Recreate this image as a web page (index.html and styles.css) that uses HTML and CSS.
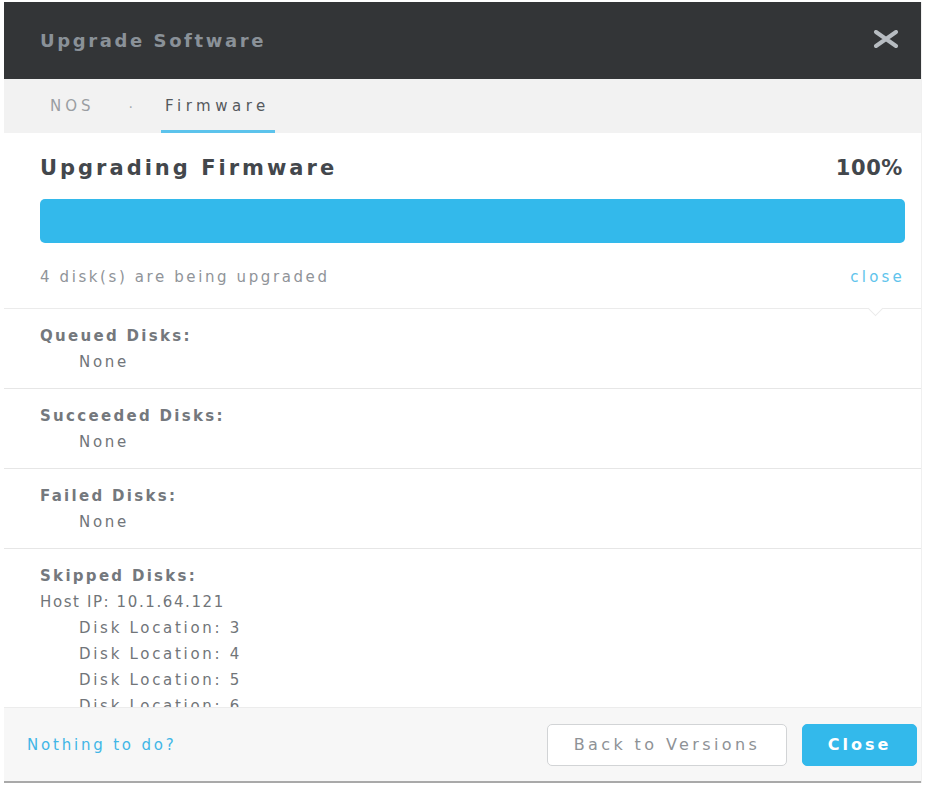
FILE: index.html
```html
<!DOCTYPE html>
<html lang="en">
<head>
<meta charset="utf-8">
<title>Upgrade Software</title>
<link rel="stylesheet" href="styles.css">
</head>
<body>
<div class="modal">
  <header class="modal-header">
    <h1 class="modal-title">Upgrade Software</h1>
    <svg class="modal-close" width="26" height="18" viewBox="0 0 26 18" aria-hidden="true">
      <path d="M3 2 L23 16 M23 2 L3 16" stroke="#b7bcc1" stroke-width="4" stroke-linecap="round"/>
    </svg>
  </header>
  <nav class="tabs">
    <span class="tab">NOS</span>
    <span class="tab-sep">·</span>
    <span class="tab tab-active">Firmware</span>
  </nav>
  <section class="progress">
    <div class="progress-head">
      <h2 class="progress-title">Upgrading Firmware</h2>
      <span class="progress-pct">100%</span>
    </div>
    <div class="bar"><div class="bar-fill" style="width:100%"></div></div>
    <div class="status">
      <span class="status-text">4 disk(s) are being upgraded</span>
      <a class="status-link">close</a>
    </div>
    <span class="caret"></span>
  </section>
  <div class="disk-list">
    <div class="group">
      <div class="group-label">Queued Disks:</div>
      <div class="indent">None</div>
    </div>
    <div class="group">
      <div class="group-label">Succeeded Disks:</div>
      <div class="indent">None</div>
    </div>
    <div class="group">
      <div class="group-label">Failed Disks:</div>
      <div class="indent">None</div>
    </div>
    <div class="group">
      <div class="group-label">Skipped Disks:</div>
      <div class="host">Host IP: 10.1.64.121</div>
      <div class="indent">Disk Location: 3</div>
      <div class="indent">Disk Location: 4</div>
      <div class="indent">Disk Location: 5</div>
      <div class="indent">Disk Location: 6</div>
    </div>
  </div>
  <footer class="modal-footer">
    <a class="footer-link">Nothing to do?</a>
    <div class="footer-actions">
      <button class="btn btn-secondary">Back to Versions</button>
      <button class="btn btn-primary">Close</button>
    </div>
  </footer>
</div>
</body>
</html>
```
FILE: styles.css
```css
html, body {
  margin: 0;
  padding: 0;
  background: #ffffff;
}

body {
  font-family: "DejaVu Sans", "Noto Sans", sans-serif;
  color: #6c7075;
}

.modal {
  width: 917px;
  margin: 2px 0 0 4px;
  display: flex;
  flex-direction: column;
  border-right: 1px solid #f0f0f0;
}

.modal-header {
  height: 77px;
  background: #333537;
  display: flex;
  align-items: center;
  justify-content: space-between;
  padding: 0 22px 0 36px;
}

.modal-title {
  margin: 0;
  font-size: 18px;
  font-weight: bold;
  color: #8a9198;
  letter-spacing: 2.6px;
}

.modal-close {
  display: block;
  margin-top: -3px;
}

.tabs {
  height: 54px;
  background: #f2f2f2;
  display: flex;
  align-items: stretch;
  padding-left: 42px;
}

.tab {
  display: flex;
  align-items: center;
  padding: 2px 4px 0;
  font-size: 15px;
  letter-spacing: 4px;
  color: #9a9ea2;
  border-bottom: 3px solid transparent;
}

.tab-sep {
  display: flex;
  align-items: center;
  padding: 2px 28px 0 30px;
  color: #a8acb0;
  font-size: 14px;
}

.tab-active {
  color: #55595d;
  border-bottom-color: #5cc3ec;
  letter-spacing: 4.5px;
  padding: 2px 5px 0 4px;
}

.progress {
  position: relative;
  padding: 21px 16px 21px 36px;
  border-bottom: 1px solid #ebebeb;
}

.progress-head {
  display: flex;
  justify-content: space-between;
  align-items: center;
  height: 28px;
  padding-right: 2px;
}

.progress-title {
  margin: 0;
  font-size: 21px;
  font-weight: bold;
  color: #43474c;
  letter-spacing: 3px;
}

.progress-pct {
  font-size: 21px;
  font-weight: bold;
  color: #43474c;
  letter-spacing: 0.6px;
}

.bar {
  margin-top: 17px;
  height: 44px;
  border-radius: 5px;
  background: #e8e8e8;
  overflow: hidden;
}

.bar-fill {
  height: 100%;
  background: #33b9eb;
}

.status {
  margin-top: 24px;
  display: flex;
  justify-content: space-between;
  align-items: center;
  height: 20px;
  font-size: 15px;
}

.status-text {
  color: #909499;
  letter-spacing: 2.6px;
}

.status-link {
  color: #5fc4ec;
  letter-spacing: 3.2px;
}

.caret {
  position: absolute;
  right: 40px;
  bottom: -6px;
  width: 10px;
  height: 10px;
  background: #ffffff;
  border-right: 1px solid #ebebeb;
  border-bottom: 1px solid #ebebeb;
  transform: rotate(45deg);
}

.disk-list {
  height: 398px;
  overflow: hidden;
}

.group {
  padding: 14px 0 13px 36px;
  border-bottom: 1px solid #e6e6e6;
  font-size: 15px;
  line-height: 26px;
  letter-spacing: 2.7px;
  color: #717579;
}

.group-label {
  font-weight: bold;
  color: #74787d;
  letter-spacing: 2.3px;
}

.host {
  letter-spacing: 1.6px;
}

.indent {
  padding-left: 39px;
}

.modal-footer {
  height: 73px;
  background: #f7f7f7;
  border-top: 1px solid #ececec;
  border-bottom: 2px solid #a9a9a9;
  display: flex;
  align-items: center;
  justify-content: space-between;
  padding: 0 4px 0 23px;
}

.footer-link {
  font-size: 15px;
  color: #41b6e6;
  letter-spacing: 2.8px;
}

.footer-actions {
  display: flex;
  gap: 15px;
}

.btn {
  height: 42px;
  border-radius: 5px;
  font-family: "DejaVu Sans", sans-serif;
  font-size: 16px;
  letter-spacing: 3.4px;
  cursor: pointer;
}

.btn-secondary {
  width: 240px;
  background: #ffffff;
  border: 1px solid #d2d4d6;
  color: #8e9296;
}

.btn-primary {
  width: 115px;
  background: #33b9eb;
  border: 1px solid #33b9eb;
  color: #ffffff;
  font-weight: bold;
  letter-spacing: 3px;
}
```
